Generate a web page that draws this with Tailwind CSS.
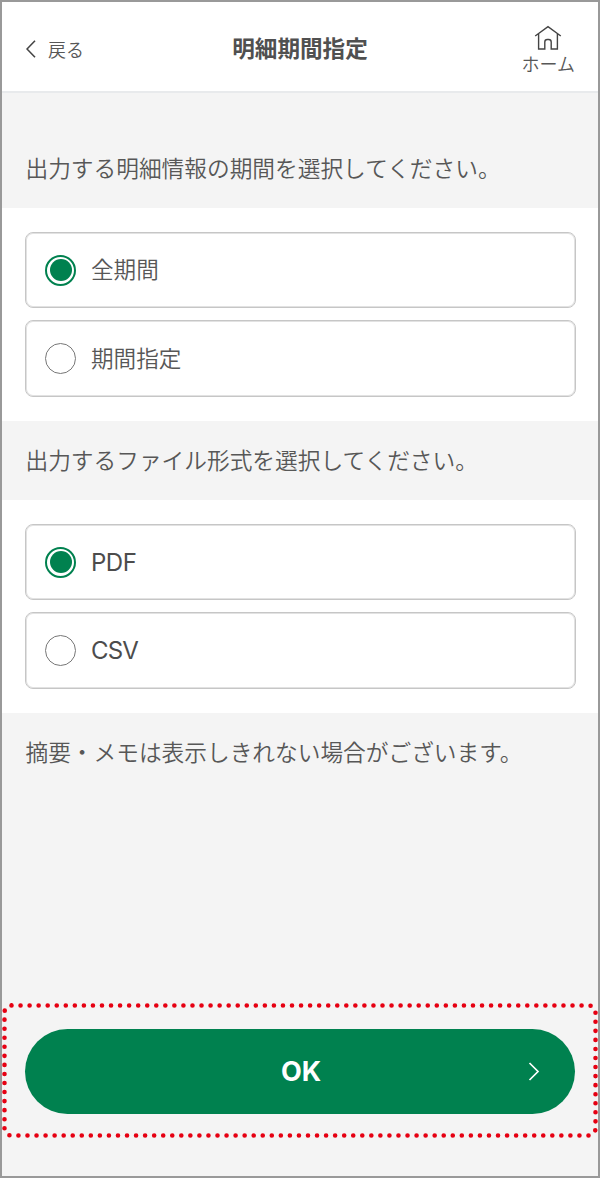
<!DOCTYPE html>
<html lang="ja">
<head>
  <meta charset="UTF-8" />
  <meta name="viewport" content="width=device-width, initial-scale=1.0" />
  <title>明細期間指定</title>
  <script src="https://cdn.jsdelivr.net/npm/@tailwindcss/browser@4"></script>
</head>
<body class="bg-[#f4f4f4] text-[#575757] font-['Inter','Noto_Sans_CJK_JP',sans-serif]">
  <div class="w-[600px] h-[1178px] border-2 border-[#999] flex flex-col overflow-hidden">

    <!-- ヘッダー -->
    <header class="h-[91px] shrink-0 bg-white border-b-2 border-[#e8eaec] grid grid-cols-3 items-center px-6">
      <a href="#" class="flex items-center gap-3 text-[18px] font-[350] pt-1">
        <svg class="w-[10px] h-[18px]" viewBox="0 0 10 18" fill="none" stroke="#444" stroke-width="1.6"><path d="M9 .8 1 9l8 8.2" /></svg>
        <span class="leading-6 pt-1">戻る</span>
      </a>
      <h1 class="text-center text-[22.6px] text-[#505050] font-bold leading-8 pt-1">明細期間指定</h1>
      <a href="#" class="flex flex-col items-end text-[18px] font-[350] pt-[11px] -mr-px">
        <svg class="w-[28px] h-[26px] mr-[13px] -mt-px" viewBox="0 0 28 26" fill="none" stroke="#444" stroke-width="1.4"><path d="M1.2 11 14 1.7 26.8 11M4.6 9v15h6.2v-7a2.5 2.5 0 0 1 2.5-2.5h1.4a2.5 2.5 0 0 1 2.5 2.5v7h6.2V9" /></svg>
        <span class="leading-[26px] pt-px">ホーム</span>
      </a>
    </header>

    <!-- 期間 -->
    <p class="h-[115px] shrink-0 px-[23.5px] pt-[60px] text-[22.7px] leading-8 font-[350]">出力する明細情報の期間を選択してください。</p>
    <div class="h-[213px] shrink-0 bg-white pl-[23px] pr-[22.5px] pt-6 flex flex-col gap-3">
      <label class="h-[76px] border border-[#c6c6c6] inset-ring inset-ring-[#e2e2e2] rounded-lg flex items-center gap-[15px] px-[19px]">
        <span class="size-[31px] rounded-full border-2 border-[#00814f] flex items-center justify-center"><span class="size-[22px] rounded-full bg-[#00814f]"></span></span>
        <span class="text-[22.6px] leading-8 font-[350]">全期間</span>
      </label>
      <label class="h-[77px] border border-[#c6c6c6] inset-ring inset-ring-[#e2e2e2] rounded-lg flex items-center gap-[15px] px-[19px]">
        <span class="size-[31px] rounded-full border border-[#777]"></span>
        <span class="text-[22.6px] leading-8 font-[350]">期間指定</span>
      </label>
    </div>

    <!-- ファイル形式 -->
    <p class="h-[79px] shrink-0 px-[23.5px] pt-6 text-[22.7px] leading-8 font-[350]">出力するファイル形式を選択してください。</p>
    <div class="h-[213px] shrink-0 bg-white pl-[23px] pr-[22.5px] pt-6 flex flex-col gap-3">
      <label class="h-[76px] border border-[#c6c6c6] inset-ring inset-ring-[#e2e2e2] rounded-lg flex items-center gap-[15px] px-[19px]">
        <span class="size-[31px] rounded-full border-2 border-[#00814f] flex items-center justify-center"><span class="size-[22px] rounded-full bg-[#00814f]"></span></span>
        <span class="text-[24px] text-[#4c4c4c] leading-8 tracking-[-0.5px] pt-0.5">PDF</span>
      </label>
      <label class="h-[77px] border border-[#c6c6c6] inset-ring inset-ring-[#e2e2e2] rounded-lg flex items-center gap-[15px] px-[19px]">
        <span class="size-[31px] rounded-full border border-[#777]"></span>
        <span class="text-[24px] text-[#4c4c4c] leading-8 tracking-[-0.8px] pt-px">CSV</span>
      </label>
    </div>

    <p class="px-[23.5px] pt-6 text-[22.7px] leading-8 font-[350]">摘要・メモは表示しきれない場合がございます。</p>

    <!-- OKボタン -->
    <div class="relative mt-auto mb-[37px] h-[136px] shrink-0 px-[23px] pt-[26px]">
      <svg class="absolute left-0 top-0 w-[596px] h-[136px]" viewBox="0 0 596 136" fill="none" stroke="#e60012" stroke-width="4.6" stroke-linecap="round">
        <rect x="2.5" y="2.5" width="591" height="130" rx="7" pathLength="1422" stroke-dasharray="0 9" />
      </svg>
      <button class="relative w-full h-[85px] rounded-full bg-[#00814f] text-white text-[27px] font-bold pt-0.5 pl-0.5">
        OK
        <svg class="absolute right-[35px] top-[33px] w-[12px] h-[19px]" viewBox="0 0 12 19" fill="none" stroke="#fff" stroke-width="1.7"><path d="m1.5 1 8.5 8.5L1.5 18" /></svg>
      </button>
    </div>
  </div>
</body>
</html>
